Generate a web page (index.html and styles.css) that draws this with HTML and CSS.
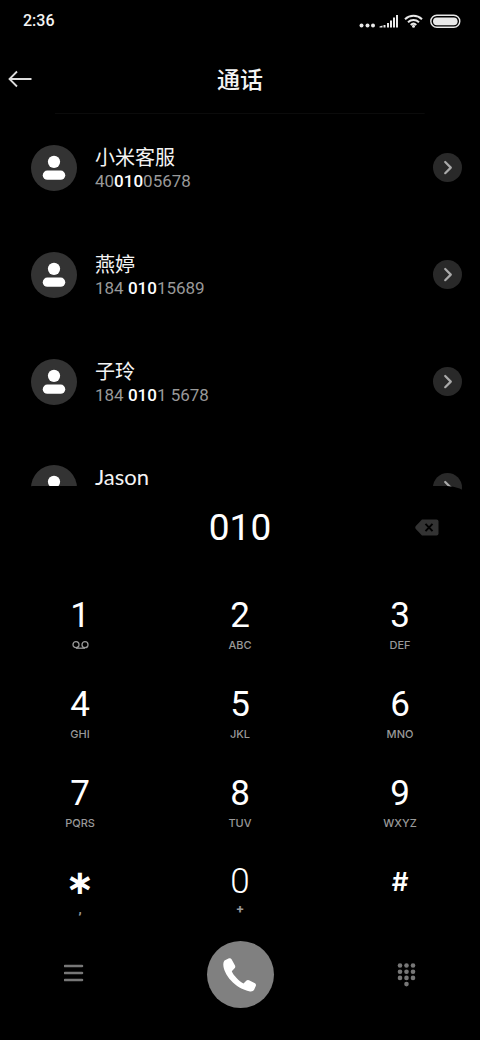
FILE: index.html
```html
<!DOCTYPE html>
<html lang="zh-CN">
<head>
<meta charset="utf-8">
<meta name="viewport" content="width=device-width, initial-scale=1">
<title>通话</title>
<link rel="stylesheet" href="styles.css">
</head>
<body>
<svg class="defs" aria-hidden="true">
  <symbol id="person" viewBox="0 0 45 45"><circle cx="22.500" cy="16.500" r="6"/><rect x="11.500" y="25" width="22" height="9" rx="4.500"/></symbol>
  <symbol id="chevron" viewBox="0 0 28 28"><path d="M11.200 8 16.800 13.600 11.200 19.200" fill="none" stroke="currentColor" stroke-width="2.200" stroke-linecap="round" stroke-linejoin="round"/></symbol>
</svg>
<div class="phone">
  <div class="status">
    <span class="time">2:36</span>
    <svg class="signals" viewBox="0 0 102 16" aria-label="信号、无线网络、电量">
      <g fill="#e8e8e8"><circle cx="2.500" cy="12.500" r="2"/><circle cx="8.500" cy="12.500" r="2"/><circle cx="14" cy="12.500" r="2"/>
      <path d="M20.500 14.500v-1l3-1v2zM24.500 12h2v2.500h-2zM28 10h2v4.500h-2zM31 7.500h2v7h-2zM34 4.500h2v10h-2zM37 2h2v12.500h-2z"/></g>
      <g fill="none" stroke="#e8e8e8" stroke-width="2"><path d="M46 6.200a12.500 12.500 0 0 1 17 0M49 9.200a8 8 0 0 1 11 0M51.700 11.900a4.200 4.200 0 0 1 5.600 0" /><rect x="71.800" y="2.300" width="29" height="12" rx="6" stroke-width="1.400"/></g>
      <circle cx="54.500" cy="13.200" r="1.500" fill="#e8e8e8"/><rect x="74" y="4.400" width="24.600" height="7.800" rx="3.900" fill="#e8e8e8"/>
    </svg>
  </div>
  <header class="header">
    <button class="icon-button back" aria-label="返回"><svg width="24" height="18" viewBox="0 0 24 18"><path d="M23.500 9H1.500M9 1.500 1.500 9 9 16.500" fill="none" stroke="currentColor" stroke-width="1.800"/></svg></button>
    <h1 class="title">通话</h1>
  </header>
  <ul class="contacts">
    <li class="contact">
      <svg class="avatar" aria-hidden="true"><use href="#person"/></svg>
      <div class="info"><div class="name">小米客服</div><div class="number">40<b>010</b>05678</div></div>
      <button class="icon-button more" aria-label="小米客服详情"><svg width="28" height="28"><use href="#chevron"/></svg></button>
    </li>
    <li class="contact">
      <svg class="avatar" aria-hidden="true"><use href="#person"/></svg>
      <div class="info"><div class="name">燕婷</div><div class="number">184 <b>010</b>15689</div></div>
      <button class="icon-button more" aria-label="燕婷详情"><svg width="28" height="28"><use href="#chevron"/></svg></button>
    </li>
    <li class="contact">
      <svg class="avatar" aria-hidden="true"><use href="#person"/></svg>
      <div class="info"><div class="name">子玲</div><div class="number">184 <b>010</b>1 5678</div></div>
      <button class="icon-button more" aria-label="子玲详情"><svg width="28" height="28"><use href="#chevron"/></svg></button>
    </li>
    <li class="contact peek">
      <svg class="avatar" aria-hidden="true"><use href="#person"/></svg>
      <div class="info"><div class="name latin">Jason</div></div>
      <button class="icon-button more" aria-label="Jason详情"><svg width="28" height="28"><use href="#chevron"/></svg></button>
    </li>
  </ul>
  <main class="dialer">
    <div class="entry">
      <output class="entered">010</output>
      <button class="icon-button erase" aria-label="删除"><svg width="24" height="17" viewBox="0 0 24 17"><path d="M7 .5h14.500a2 2 0 0 1 2 2v12a2 2 0 0 1-2 2H7L.8 10Q-.3 8.500.8 7z" fill="#333"/><path d="m10.500 4.900 7 7.200m0-7.200-7 7.200" stroke="#000" stroke-width="2"/></svg></button>
    </div>
    <div class="keys">
      <button class="key"><span class="digit">1</span><span class="letters"><svg width="17" height="8" viewBox="0 0 17 8" aria-label="语音信箱"><g fill="none" stroke="currentColor" stroke-width="1.300"><circle cx="4" cy="3.700" r="3"/><circle cx="13" cy="3.700" r="3"/><path d="M4 7.200h9"/></g></svg></span></button>
      <button class="key"><span class="digit">2</span><span class="letters">ABC</span></button>
      <button class="key"><span class="digit">3</span><span class="letters">DEF</span></button>
      <button class="key"><span class="digit">4</span><span class="letters">GHI</span></button>
      <button class="key"><span class="digit">5</span><span class="letters">JKL</span></button>
      <button class="key"><span class="digit">6</span><span class="letters">MNO</span></button>
      <button class="key"><span class="digit">7</span><span class="letters">PQRS</span></button>
      <button class="key"><span class="digit">8</span><span class="letters">TUV</span></button>
      <button class="key"><span class="digit">9</span><span class="letters">WXYZ</span></button>
      <button class="key"><span class="digit star">∗</span><span class="letters sign">,</span></button>
      <button class="key"><span class="digit zero">0</span><span class="letters sign">+</span></button>
      <button class="key"><span class="digit hash">#</span></button>
    </div>
    <div class="actions">
      <button class="icon-button" aria-label="菜单"><svg width="32" height="24" viewBox="0 0 32 24"><path d="M1 3h17M1 10h17M1 17h17" stroke="currentColor" stroke-width="2.600" stroke-linecap="round"/></svg></button>
      <button class="icon-button call" aria-label="拨打"><svg width="34" height="34" viewBox="0 0 34 34"><path d="M1.500 2.600 6 .3Q7.800-.1 8.700 1.500L12 7.600Q12.700 9.100 11.600 10.200L8.800 13.200C10.500 17.500 16 23 20.500 25.400L23.500 22.400Q24.600 21.600 26 22.200L32 25.300Q33.300 26.200 32.900 27.700L31 32Q30.100 33.700 27 33.400C12 31 0 16 .3 6Q.4 3.700 1.500 2.600Z" fill="#fff"/></svg></button>
      <button class="icon-button" aria-label="收起键盘"><svg width="32" height="24" viewBox="0 0 32 24"><g fill="currentColor"><circle cx="16" cy="2.500" r="2.300"/><circle cx="22.500" cy="2.500" r="2.300"/><circle cx="29" cy="2.500" r="2.300"/><circle cx="16" cy="8.700" r="2.300"/><circle cx="22.500" cy="8.700" r="2.300"/><circle cx="29" cy="8.700" r="2.300"/><circle cx="16" cy="14.900" r="2.300"/><circle cx="22.500" cy="14.900" r="2.300"/><circle cx="29" cy="14.900" r="2.300"/><circle cx="22.500" cy="21.100" r="2.300"/></g></svg></button>
    </div>
  </main>
</div>
</body>
</html>
```
FILE: styles.css
```css
* { box-sizing: border-box; }
body { margin: 0; background: #000; color: #f4f4f4; font-family: Lato, "Noto Sans CJK SC", sans-serif; }
button { border: 0; padding: 0; background: none; color: inherit; font: inherit; }
svg { display: block; }
.defs { position: absolute; width: 0; height: 0; }
.phone { min-height: 100vh; display: flex; flex-direction: column; }
.icon-button { display: grid; place-items: center; }

.status { display: flex; justify-content: space-between; align-items: center; height: 44px; padding: 0 19px 2px 23px; }
.time { font: 500 16px/20px Roboto, sans-serif; }
.signals { width: 102px; height: 16px; }

.header { display: grid; grid-template-columns: 60px 1fr 60px; align-items: center; height: 70px; padding: 0 8px; background: linear-gradient(#0b0b0b, #0b0b0b) center bottom / 77% 1px no-repeat; }
.back { justify-self: start; color: #ddd; }
.title { margin: 0; text-align: center; font-size: 23px; line-height: 32px; font-weight: 500; }

.contacts { margin: 0; padding: 0; list-style: none; }
.contact { display: flex; align-items: center; gap: 18px; height: 107px; padding: 0 18px 0 31px; }
.peek { height: 84px; align-items: flex-start; padding-top: 30px; overflow: hidden; }
.avatar { flex: none; width: 46px; height: 46px; border-radius: 50%; background: #333; fill: #fff; }
.info { flex: 1; }
.name { font-size: 20px; line-height: 26px; }
.latin { font-size: 22px; line-height: 24px; }
.number { font: 400 17px/22px Roboto, sans-serif; color: #999; }
.number b { color: #fff; font-weight: 500; }
.more { width: 29px; height: 29px; border-radius: 50%; background: #292929; color: #aaa; }
.peek .more { margin-top: 8px; }

.dialer { position: relative; margin-top: -33px; border-radius: 33px 33px 0 0; background: #000; flex: 1; }
.entry { display: grid; grid-template-columns: 80px 1fr 80px; align-items: center; height: 99px; padding: 0 41px 16px; }
.entered { grid-column: 2; text-align: center; font: 400 37px/44px Roboto, sans-serif; color: #fff; }
.erase { justify-self: end; }
.keys { display: grid; grid-template-columns: repeat(3, 1fr); grid-auto-rows: 89px; }
.key { display: flex; flex-direction: column; align-items: center; gap: 2px; padding-top: 11px; }
.digit { font: 400 35px/40px Roboto, sans-serif; color: #fff; }
.letters { display: grid; place-items: center; height: 14px; font: 500 11px/14px Inter, sans-serif; color: #999; }
.sign { font: 700 13px/14px Roboto, sans-serif; }
.zero { font-weight: 300; line-height: 38px; }
.star { font: 700 34px/38px "DejaVu Sans", sans-serif; }
.hash { font: 600 26px/38px Inter, sans-serif; }
.actions { display: flex; justify-content: space-between; align-items: center; padding: 0 64px 32px; color: #777; }
.call { width: 67px; height: 67px; border-radius: 50%; background: #808080; }
```
